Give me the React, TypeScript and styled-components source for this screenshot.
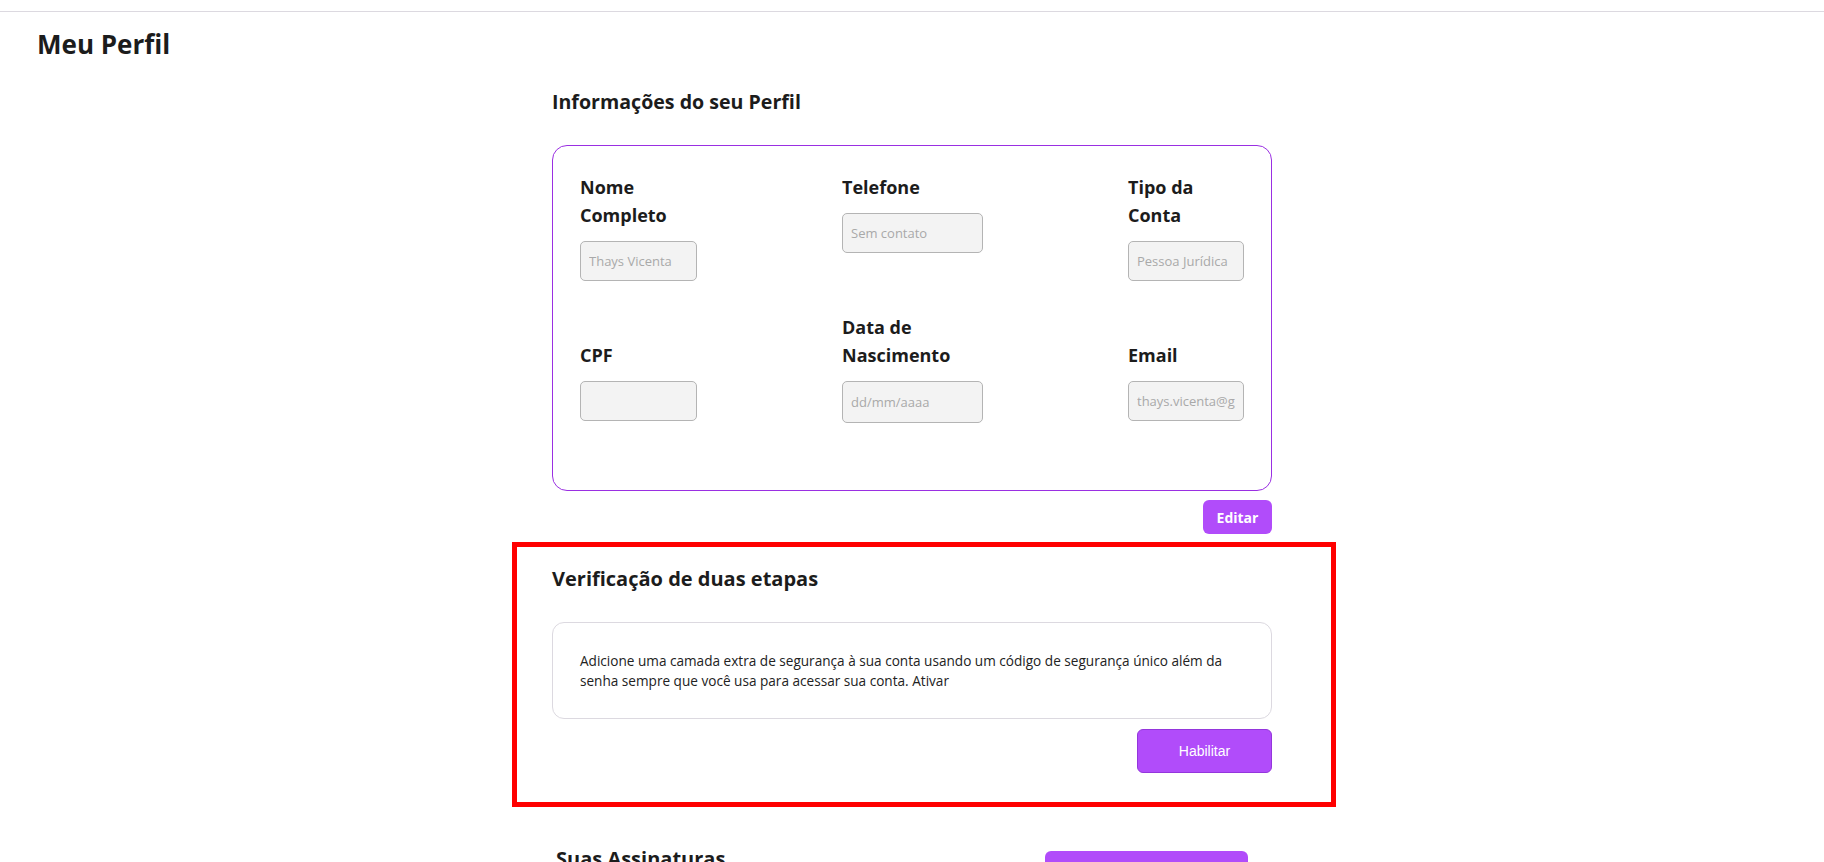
import styled, { createGlobalStyle } from "styled-components";

const GlobalStyle = createGlobalStyle`
  body {
    margin: 0;
    background: #ffffff;
    font-family: "Open Sans", Lato, sans-serif;
    color: #1e1e1e;
  }
`;

const Page = styled.div`
  min-height: 862px;
  overflow: hidden;
`;

const TopBar = styled.div`
  height: 11px;
  border-bottom: 1px solid #dcd9e0;
`;

const PageTitle = styled.h1`
  margin: 17px 0 0;
  padding-left: 37px;
  font-size: 26px;
  font-weight: 700;
  line-height: 1.2;
  color: #1c1c1c;
`;

const Content = styled.main`
  width: 720px;
  margin: 30px auto 0;
`;

const SectionTitle = styled.h2<{ size?: number }>`
  margin: 0;
  font-size: ${(props) => (props.size ? `${props.size}px` : "19.6px")};
  font-weight: 700;
  line-height: 24px;
  color: #1c1c1c;
`;

const ProfileCard = styled.section`
  margin-top: 31px;
  border: 1px solid #9a2fe2;
  border-radius: 15px;
  padding: 27px 27px 67px;
  display: flex;
  justify-content: space-between;
  align-items: flex-start;
`;

const FieldColumn = styled.div<{ width: number }>`
  width: ${(props) => `${props.width}px`};
  display: flex;
  flex-direction: column;
  gap: 60px;
`;

const Field = styled.label`
  display: flex;
  flex-direction: column;
  gap: 12px;
`;

const FieldLabel = styled.span`
  font-size: 18px;
  font-weight: 700;
  line-height: 28px;
  color: #1c1c1c;
`;

const FieldInput = styled.input<{ tall?: boolean }>`
  box-sizing: border-box;
  width: 100%;
  height: ${(props) => (props.tall ? "42px" : "40px")};
  padding: 0 8px;
  border: 1px solid #b4b4b4;
  border-radius: 5px;
  background: #f3f3f3;
  font-family: "Open Sans", sans-serif;
  font-size: 13px;
  color: #a6a6a6;
  outline: none;
  &::placeholder {
    color: #a9a9a9;
  }
`;

const Actions = styled.div<{ gap: number }>`
  display: flex;
  justify-content: flex-end;
  margin-top: ${(props) => `${props.gap}px`};
`;

const EditButton = styled.button`
  width: 69px;
  height: 34px;
  border: none;
  border-radius: 6px;
  background: #b14cfa;
  color: #ffffff;
  font-family: "Open Sans", sans-serif;
  font-size: 14px;
  font-weight: 700;
`;

const Highlight = styled.div`
  margin: 8px -64px 0 -40px;
  padding: 20px 59px 29px 35px;
  border: 5px solid #ff0000;
`;

const InfoCard = styled.div`
  margin-top: 31px;
  border: 1px solid #dcd9e0;
  border-radius: 12px;
  padding: 28px 27px 27px;
  font-size: 13.6px;
  line-height: 20px;
  color: #222222;
`;

const EnableButton = styled.button`
  width: 135px;
  height: 44px;
  border: 1px solid #9436dc;
  border-radius: 6px;
  background: #b14cfa;
  color: #ffffff;
  font-family: "Liberation Sans", Arial, sans-serif;
  font-size: 14px;
`;

const SubscriptionsRow = styled.div`
  margin-top: 40px;
  padding: 0 24px 0 4px;
  display: flex;
  justify-content: space-between;
  align-items: flex-start;
`;

const ManageButton = styled.button`
  margin-top: 4px;
  width: 203px;
  height: 34px;
  border: none;
  border-radius: 6px;
  background: #b14cfa;
  color: #ffffff;
  font-family: "Open Sans", sans-serif;
  font-size: 14px;
`;

export default function App() {
  return (
    <Page>
      <GlobalStyle />
      <TopBar />
      <PageTitle>Meu Perfil</PageTitle>
      <Content>
        <SectionTitle>Informações do seu Perfil</SectionTitle>
        <ProfileCard>
          <FieldColumn width={117}>
            <Field>
              <FieldLabel>Nome Completo</FieldLabel>
              <FieldInput placeholder="Thays Vicenta" />
            </Field>
            <Field>
              <FieldLabel>CPF</FieldLabel>
              <FieldInput />
            </Field>
          </FieldColumn>
          <FieldColumn width={141}>
            <Field>
              <FieldLabel>Telefone</FieldLabel>
              <FieldInput placeholder="Sem contato" />
            </Field>
            <Field>
              <FieldLabel>Data de Nascimento</FieldLabel>
              <FieldInput tall placeholder="dd/mm/aaaa" />
            </Field>
          </FieldColumn>
          <FieldColumn width={116}>
            <Field>
              <FieldLabel>Tipo da Conta</FieldLabel>
              <FieldInput placeholder="Pessoa Jurídica" />
            </Field>
            <Field>
              <FieldLabel>Email</FieldLabel>
              <FieldInput placeholder="thays.vicenta@gmail.com" />
            </Field>
          </FieldColumn>
        </ProfileCard>
        <Actions gap={9}>
          <EditButton>Editar</EditButton>
        </Actions>

        <Highlight>
          <SectionTitle size={20}>Verificação de duas etapas</SectionTitle>
          <InfoCard>
            Adicione uma camada extra de segurança à sua conta usando um código
            de segurança único além da senha sempre que você usa para acessar
            sua conta. Ativar
          </InfoCard>
          <Actions gap={10}>
            <EnableButton>Habilitar</EnableButton>
          </Actions>
        </Highlight>

        <SubscriptionsRow>
          <SectionTitle size={20}>Suas Assinaturas</SectionTitle>
          <ManageButton>Gestão de assinaturas</ManageButton>
        </SubscriptionsRow>
      </Content>
    </Page>
  );
}
